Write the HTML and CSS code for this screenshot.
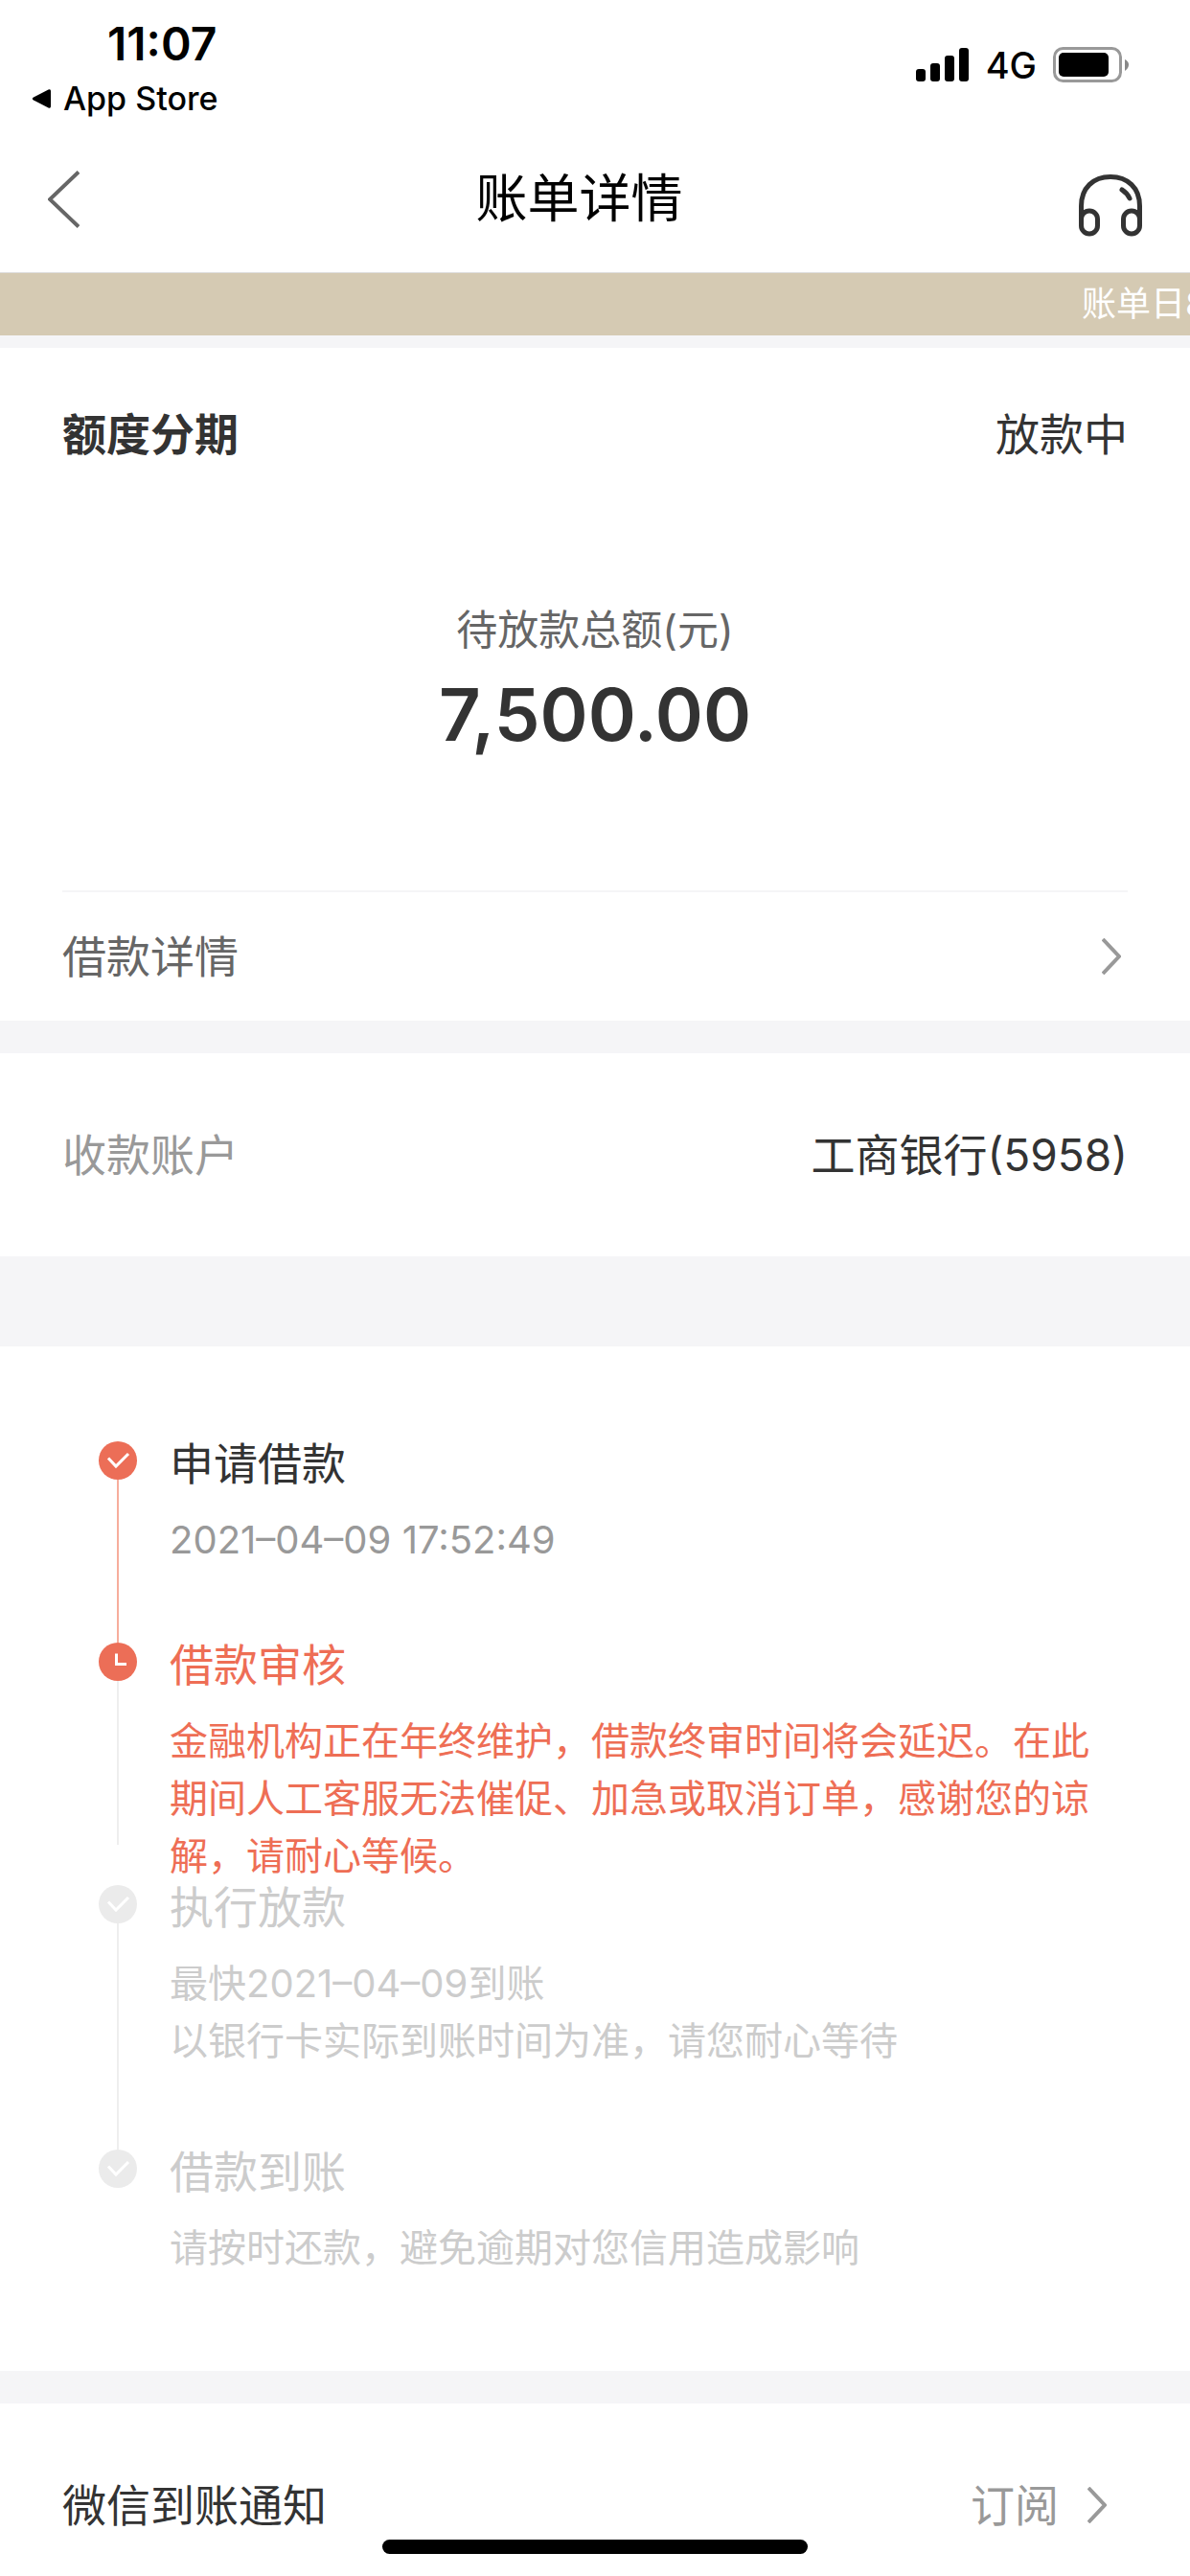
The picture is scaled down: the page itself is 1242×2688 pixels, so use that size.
FILE: index.html
```html
<!DOCTYPE html>
<html lang="zh-CN">
<head>
  <meta charset="utf-8">
  <meta name="viewport" content="width=device-width, initial-scale=1">
  <title>账单详情</title>
  <link rel="stylesheet" href="styles.css">
</head>
<body>
  <div class="status-bar">
    <div class="status-left">
      <span class="time">11:07</span>
      <a class="back-app" href="#">
        <svg width="21" height="22" viewBox="0 0 21 22" aria-hidden="true"><path d="M2 9.500 17.500 1.500Q20 .5 20 3V19Q20 21.500 17.500 20.500L2 12.500Q-.5 11 2 9.500Z"/></svg>
        App Store
      </a>
    </div>
    <div class="status-right">
      <svg width="56" height="36" viewBox="0 0 56 36" aria-hidden="true"><rect y="22" width="10" height="13" rx="3"/><rect x="15" y="16" width="10" height="19" rx="3"/><rect x="30" y="8" width="10" height="27" rx="3"/><rect x="45" width="10" height="35" rx="3"/></svg>
      <span class="network">4G</span>
      <svg width="80" height="38" viewBox="0 0 80 38" aria-hidden="true"><rect x="1.500" y="1.500" width="69" height="34" rx="9" fill="none" stroke="#999" stroke-width="3"/><rect x="6" y="6" width="52" height="25" rx="5"/><path d="M75 13Q79 15 79 18.500T75 25Z" fill="#888"/></svg>
    </div>
  </div>

  <header class="nav">
    <button class="icon-button" type="button" aria-label="返回">
      <svg width="33" height="60" viewBox="0 0 33 60"><path d="M32 1.500 2 30 32 58.500" fill="none" stroke="#666" stroke-width="4"/></svg>
    </button>
    <h1 class="nav-title">账单详情</h1>
    <button class="icon-button" type="button" aria-label="客服">
      <svg width="66" height="78" viewBox="0 0 66 78"><g fill="none" stroke="#333" stroke-width="5" stroke-linecap="round"><path d="M2.500 64V46C2.500 27 15 15.500 33 15.500S63.500 27 63.500 46V64"/><rect x="2.500" y="51" width="17" height="24" rx="8.500"/><rect x="46.500" y="51" width="17" height="24" rx="8.500"/><path d="M45 29Q50 32 53 38"/></g></svg>
    </button>
  </header>

  <div class="notice"><p class="notice-text">账单日8</p></div>

  <main>
    <section class="card summary">
      <div class="summary-head">
        <h2 class="summary-title">额度分期</h2>
        <span>放款中</span>
      </div>
      <div class="amount">
        <p class="amount-label">待放款总额(元)</p>
        <p class="amount-value">7,500.00</p>
      </div>
      <a class="detail-link" href="#">
        借款详情
        <svg class="chevron" width="20" height="38" viewBox="0 0 20 38" aria-hidden="true"><path d="M1 1 18 19 1 37"/></svg>
      </a>
    </section>

    <section class="card account">
      <span class="account-label">收款账户</span>
      <span>工商银行(5958)</span>
    </section>

    <section class="card progress">
      <ol class="steps">
        <li class="step step-done">
          <div class="rail">
            <svg class="marker" width="40" height="40" viewBox="0 0 40 40" aria-hidden="true"><circle cx="20" cy="20" r="20"/><path d="M10 17.500 18 26 31 13"/></svg>
          </div>
          <div class="step-body">
            <h3 class="step-title">申请借款</h3>
            <p class="step-text">2021–04–09 17:52:49</p>
          </div>
        </li>
        <li class="step step-current">
          <div class="rail">
            <svg class="marker" width="40" height="40" viewBox="0 0 40 40" aria-hidden="true"><circle cx="20" cy="20" r="20"/><path d="M18.500 11.500V22.500H29"/></svg>
          </div>
          <div class="step-body">
            <h3 class="step-title">借款审核</h3>
            <p class="step-text">金融机构正在年终维护，借款终审时间将会延迟。在此期间人工客服无法催促、加急或取消订单，感谢您的谅解，请耐心等候。</p>
          </div>
        </li>
        <li class="step step-next">
          <div class="rail">
            <svg class="marker" width="40" height="40" viewBox="0 0 40 40" aria-hidden="true"><circle cx="20" cy="20" r="20"/><path d="M10 17.500 18 26 31 13"/></svg>
          </div>
          <div class="step-body">
            <h3 class="step-title">执行放款</h3>
            <p class="step-text">最快2021–04–09到账<br>以银行卡实际到账时间为准，请您耐心等待</p>
          </div>
        </li>
        <li class="step step-last">
          <div class="rail">
            <svg class="marker" width="40" height="40" viewBox="0 0 40 40" aria-hidden="true"><circle cx="20" cy="20" r="20"/><path d="M10 17.500 18 26 31 13"/></svg>
          </div>
          <div class="step-body">
            <h3 class="step-title">借款到账</h3>
            <p class="step-text">请按时还款，避免逾期对您信用造成影响</p>
          </div>
        </li>
      </ol>
    </section>

    <section class="card subscribe">
      <span>微信到账通知</span>
      <a class="subscribe-link" href="#">
        订阅
        <svg class="chevron" width="20" height="38" viewBox="0 0 20 38" aria-hidden="true"><path d="M1 1 18 19 1 37"/></svg>
      </a>
    </section>
  </main>
  <div class="home-indicator"></div>
</body>
</html>
```
FILE: styles.css
```css
* {
  box-sizing: border-box;
}

body,
h1,
h2,
h3,
p,
ol {
  margin: 0;
  padding: 0;
}

body {
  position: relative;
  min-height: 100vh;
  background: #fff;
  color: #333;
  font: 400 46px/50px Inter, "Noto Sans CJK SC", sans-serif;
}

svg {
  display: block;
  flex: none;
}

a {
  color: inherit;
  text-decoration: none;
}

.status-bar {
  display: flex;
  justify-content: space-between;
  padding: 18px 63px 0 33px;
  color: #000;
}

.status-left {
  display: flex;
  flex-direction: column;
}

.time {
  padding-left: 79px;
  font-size: 48px;
  font-weight: 600;
  line-height: 56px;
}

.back-app {
  display: flex;
  align-items: center;
  gap: 12px;
  font-size: 34px;
  font-weight: 500;
  line-height: 58px;
}

.status-right {
  display: flex;
  align-items: center;
  height: 100px;
}

.network {
  margin: 0 17px;
  font-size: 38px;
  font-weight: 500;
}

.nav {
  display: flex;
  align-items: center;
  justify-content: space-between;
  height: 153px;
  padding: 0 50px;
  border-bottom: 1px solid #ddd;
}

.nav-title {
  color: #000;
  font-size: 54px;
  font-weight: 400;
  line-height: 60px;
}

.icon-button {
  padding: 0;
  border: 0;
  background: none;
}

.notice {
  overflow: hidden;
  padding-left: calc(100% - 113px);
  background: #d5cab3;
  color: #fff;
}

.notice-text {
  font-size: 36px;
  line-height: 65px;
  white-space: nowrap;
}

.card {
  padding: 0 65px;
  border-top: 34px solid #f5f5f7;
}

.summary {
  border-top-width: 13px;
}

.summary-head {
  display: flex;
  justify-content: space-between;
  padding-top: 65px;
}

.summary-title {
  font-size: 46px;
  font-weight: 700;
}

.amount {
  padding: 149px 0 134px;
  text-align: center;
}

.amount-label {
  color: #666;
  font-size: 43px;
  line-height: 60px;
}

.amount-value {
  margin-top: 8px;
  font-size: 76px;
  font-weight: 600;
  line-height: 100px;
}

.detail-link {
  display: flex;
  align-items: center;
  justify-content: space-between;
  padding: 42px 7px 42px 0;
  border-top: 2px solid #f5f5f7;
  color: #666;
}

.chevron {
  fill: none;
  stroke: #999;
  stroke-width: 4;
}

.account {
  display: flex;
  justify-content: space-between;
  padding: 81px 65px;
}

.account-label {
  color: #999;
}

.progress {
  padding: 99px 103px 98px;
  border-top-width: 94px;
}

.steps {
  list-style: none;
}

.step {
  display: flex;
  gap: 34px;
  color: #ccc;
}

.rail {
  display: flex;
  flex: none;
  flex-direction: column;
  align-items: center;
  width: 40px;
}

.rail::after {
  flex: 1;
  width: 2px;
  background: #eee;
  content: "";
}

.marker {
  fill: #ebebeb;
}

.marker path {
  fill: none;
  stroke: #fff;
  stroke-width: 3;
}

.step-title {
  font-size: 46px;
  font-weight: 400;
  line-height: 46px;
}

.step-text {
  margin-top: 27px;
  font-size: 40px;
  line-height: 60px;
}

.step-done {
  color: #999;
}

.step-done .step-body {
  padding-bottom: 77px;
}

.step-done .step-title {
  color: #333;
}

.step-done .rail::after {
  background: #f7ad9c;
}

.step-done .marker,
.step-current .marker {
  fill: #ec6e57;
}

.step-current {
  color: #ee6e55;
}

.step-current .rail {
  padding-bottom: 42px;
}

.step-next .step-body {
  padding-bottom: 83px;
}

.step-last .rail::after {
  content: none;
}

.subscribe {
  display: flex;
  justify-content: space-between;
  padding: 81px 87px 50px 65px;
}

.subscribe-link {
  display: flex;
  align-items: center;
  gap: 30px;
  color: #999;
}

.home-indicator {
  position: absolute;
  bottom: 24px;
  left: 50%;
  width: 444px;
  height: 15px;
  border-radius: 8px;
  background: #000;
  transform: translateX(-50%);
}
```
